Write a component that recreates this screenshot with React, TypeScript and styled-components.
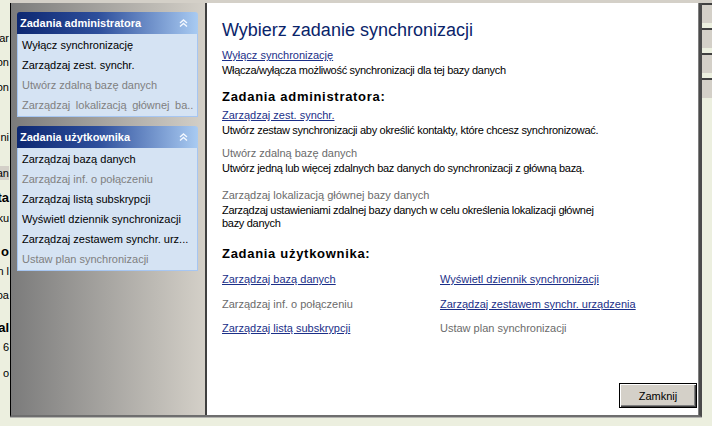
import React from 'react';
import styled, { createGlobalStyle } from 'styled-components';

const GlobalStyle = createGlobalStyle`
  * { box-sizing: border-box; }
  html, body { margin: 0; padding: 0; }
  body {
    width: 712px;
    height: 426px;
    overflow: hidden;
    background: #ecefdf;
    font-family: 'Liberation Sans', Arial, sans-serif;
    font-size: 11px;
    color: #000;
  }
`;

const Screen = styled.div`
  display: flex;
  width: 712px;
  height: 426px;
  background: #ecefdf;
`;

/* bits of the window lying behind the dialog */
const BackStrip = styled.div`
  width: 10px;
  flex: none;
  overflow: hidden;
  display: flex;
  flex-direction: column;
  padding-right: 1px;
`;

const BackLine = styled.div<{ $top: number; $bold?: boolean; $boxed?: boolean }>`
  display: flex;
  justify-content: flex-end;
  white-space: nowrap;
  height: 14px;
  line-height: 14px;
  margin-top: ${({ $top }) => $top}px;
  font-size: ${({ $bold }) => ($bold ? '13px' : '11px')};
  font-weight: ${({ $bold }) => ($bold ? 700 : 400)};
  background: ${({ $boxed }) => ($boxed ? '#d4d0c8' : 'transparent')};
`;

const RightStrip = styled.div`
  flex: 1;
  display: flex;
  flex-direction: column;
`;

const StripCap = styled.div`
  height: 3px;
  background: #d4d0c8;
`;

const StripTab = styled.div`
  height: 20px;
  margin-bottom: 5px;
  background: #d4d0c8;
  border-top: 2px solid #404040;
`;

const Dialog = styled.div`
  width: 692px;
  height: 417px;
  flex: none;
  display: flex;
  flex-direction: column;
  background: #d4d0c8;
  box-shadow: 0 1px 0 #b4b4b0;
`;

const DialogBody = styled.div`
  flex: 1;
  display: flex;
  margin-top: 3px;
  border-left: 1px solid #000;
  border-right: 3px solid #4a4a4a;
  border-bottom: 2px solid #6e6e6e;
  min-height: 0;
`;

const TaskPane = styled.div`
  width: 196px;
  flex: none;
  display: flex;
  flex-direction: column;
  gap: 9px;
  padding: 9px 7px 0 6px;
  background: linear-gradient(to right, #7b7b7b, #d4d0c8);
  border-right: 2px solid #404040;
`;

const Group = styled.div`
  display: flex;
  flex-direction: column;
`;

const GroupHeader = styled.div`
  height: 22px;
  display: flex;
  align-items: center;
  justify-content: space-between;
  padding: 0 10px 0 3px;
  border-radius: 3px 3px 0 0;
  background: linear-gradient(to right, #0d2872 0%, #2e4f9c 45%, #a9cbf2 100%);
  color: #fff;
  font-weight: 700;
  font-size: 11px;
`;

const GroupBody = styled.div`
  padding: 1px 0;
  background: #d5e3f3;
  border: 1px solid #a6c6f2;
  border-top: none;
`;

const GroupItem = styled.div<{ $disabled?: boolean; $spread?: boolean }>`
  height: 20px;
  line-height: 20px;
  padding-left: 4px;
  white-space: nowrap;
  overflow: hidden;
  color: ${({ $disabled }) => ($disabled ? '#808080' : '#000')};
  word-spacing: ${({ $spread }) => ($spread ? '2.5px' : '0')};
`;

const Content = styled.div`
  flex: 1;
  display: flex;
  flex-direction: column;
  padding: 16px 1px 7px 15px;
  background: #fff;
  border-right: 1px solid #808080;
`;

const Title = styled.h1`
  margin: 0;
  font-size: 18px;
  line-height: 22px;
  font-weight: 400;
  color: #0a246a;
`;

const SectionTitle = styled.h2<{ $gap: number }>`
  margin: ${({ $gap }) => $gap}px 0 0;
  font-size: 13px;
  line-height: 18px;
  font-weight: 700;
  letter-spacing: 0.7px;
`;

const Task = styled.div<{ $gap: number }>`
  margin-top: ${({ $gap }) => $gap}px;
`;

const TaskLink = styled.a<{ $disabled?: boolean }>`
  display: block;
  width: fit-content;
  line-height: 16px;
  color: ${({ $disabled }) => ($disabled ? '#6b6b6b' : '#1b2f88')};
  text-decoration: ${({ $disabled }) => ($disabled ? 'none' : 'underline')};
  cursor: ${({ $disabled }) => ($disabled ? 'default' : 'pointer')};
`;

const TaskDesc = styled.div`
  width: 392px;
  margin-top: 1px;
  line-height: 13px;
  letter-spacing: -0.3px;
`;

const LinkGrid = styled.div`
  display: grid;
  grid-template-columns: 218px 1fr;
  row-gap: 8.5px;
  margin-top: 8px;
`;

const Footer = styled.div`
  margin-top: auto;
  display: flex;
  justify-content: flex-end;
`;

const Button = styled.button`
  width: 78px;
  height: 25px;
  padding: 0;
  font-family: inherit;
  font-size: 11px;
  color: #000;
  background: #d4d0c8;
  border: 1px solid #000;
  box-shadow: inset 1px 1px 0 #fff, inset -1px -1px 0 #404040, inset -2px -2px 0 #808080;
`;

const Chevron = () => (
  <svg width="9" height="8" viewBox="0 0 9 8">
    <path d="M1 4 L4.5 1 L8 4 M1 7.5 L4.5 4.5 L8 7.5" stroke="#f4f8ff" strokeWidth="1.4" fill="none" />
  </svg>
);

const backLines = [
  { text: 'ar', y: 38 },
  { text: 'on', y: 62 },
  { text: 'on', y: 87 },
  { text: 'ni', y: 137 },
  { text: 'an', y: 173, boxed: true },
  { text: 'ta', y: 198, bold: true },
  { text: 'ku', y: 218 },
  { text: 'o', y: 252, bold: true },
  { text: 'n l', y: 271 },
  { text: 'oa', y: 295 },
  { text: 'al', y: 328, bold: true },
  { text: 'n 6', y: 347 },
  { text: 'o', y: 373 },
];

const groups = [
  {
    title: 'Zadania administratora',
    items: [
      { label: 'Wyłącz synchronizację' },
      { label: 'Zarządzaj zest. synchr.' },
      { label: 'Utwórz zdalną bazę danych', disabled: true },
      { label: 'Zarządzaj lokalizacją głównej ba..', disabled: true, spread: true },
    ],
  },
  {
    title: 'Zadania użytkownika',
    items: [
      { label: 'Zarządzaj bazą danych' },
      { label: 'Zarządzaj inf. o połączeniu', disabled: true },
      { label: 'Zarządzaj listą subskrypcji' },
      { label: 'Wyświetl dziennik synchronizacji' },
      { label: 'Zarządzaj zestawem synchr. urz...' },
      { label: 'Ustaw plan synchronizacji', disabled: true },
    ],
  },
];

const adminTasks = [
  {
    label: 'Zarządzaj zest. synchr.',
    desc: 'Utwórz zestaw synchronizacji aby określić kontakty, które chcesz synchronizować.',
    gap: 1,
  },
  {
    label: 'Utwórz zdalną bazę danych',
    desc: 'Utwórz jedną lub więcej zdalnych baz danych do synchronizacji z główną bazą.',
    disabled: true,
    gap: 8,
  },
  {
    label: 'Zarządzaj lokalizacją głównej bazy danych',
    desc: 'Zarządzaj ustawieniami zdalnej bazy danych w celu określenia lokalizacji głównej bazy danych',
    disabled: true,
    gap: 12,
  },
];

const userTasks = [
  { label: 'Zarządzaj bazą danych' },
  { label: 'Wyświetl dziennik synchronizacji' },
  { label: 'Zarządzaj inf. o połączeniu', disabled: true },
  { label: 'Zarządzaj zestawem  synchr.  urządzenia' },
  { label: 'Zarządzaj listą subskrypcji' },
  { label: 'Ustaw plan synchronizacji', disabled: true },
];

export default function App() {
  let prevEnd = 0;

  return (
    <>
      <GlobalStyle />
      <Screen>
        <BackStrip>
          {backLines.map((line, i) => {
            const top = line.y - 7 - prevEnd;
            prevEnd = line.y + 7;
            return (
              <BackLine key={i} $top={top} $bold={line.bold} $boxed={line.boxed}>
                {line.text}
              </BackLine>
            );
          })}
        </BackStrip>

        <Dialog>
          <DialogBody>
            <TaskPane>
              {groups.map((group) => (
                <Group key={group.title}>
                  <GroupHeader>
                    <span>{group.title}</span>
                    <Chevron />
                  </GroupHeader>
                  <GroupBody>
                    {group.items.map((item) => (
                      <GroupItem key={item.label} $disabled={item.disabled} $spread={item.spread}>
                        {item.label}
                      </GroupItem>
                    ))}
                  </GroupBody>
                </Group>
              ))}
            </TaskPane>

            <Content>
              <Title>Wybierz zadanie synchronizacji</Title>
              <Task $gap={6}>
                <TaskLink>Wyłącz synchronizację</TaskLink>
                <TaskDesc>Włącza/wyłącza możliwość synchronizacji dla tej bazy danych</TaskDesc>
              </Task>

              <SectionTitle $gap={11}>Zadania administratora:</SectionTitle>
              {adminTasks.map((task) => (
                <Task key={task.label} $gap={task.gap}>
                  <TaskLink $disabled={task.disabled}>{task.label}</TaskLink>
                  <TaskDesc>{task.desc}</TaskDesc>
                </Task>
              ))}

              <SectionTitle $gap={15}>Zadania użytkownika:</SectionTitle>
              <LinkGrid>
                {userTasks.map((task) => (
                  <TaskLink key={task.label} $disabled={task.disabled}>
                    {task.label}
                  </TaskLink>
                ))}
              </LinkGrid>

              <Footer>
                <Button>Zamknij</Button>
              </Footer>
            </Content>
          </DialogBody>
        </Dialog>

        <RightStrip>
          <StripCap />
          <StripTab />
          <StripTab />
          <StripTab />
          <StripTab />
        </RightStrip>
      </Screen>
    </>
  );
}
